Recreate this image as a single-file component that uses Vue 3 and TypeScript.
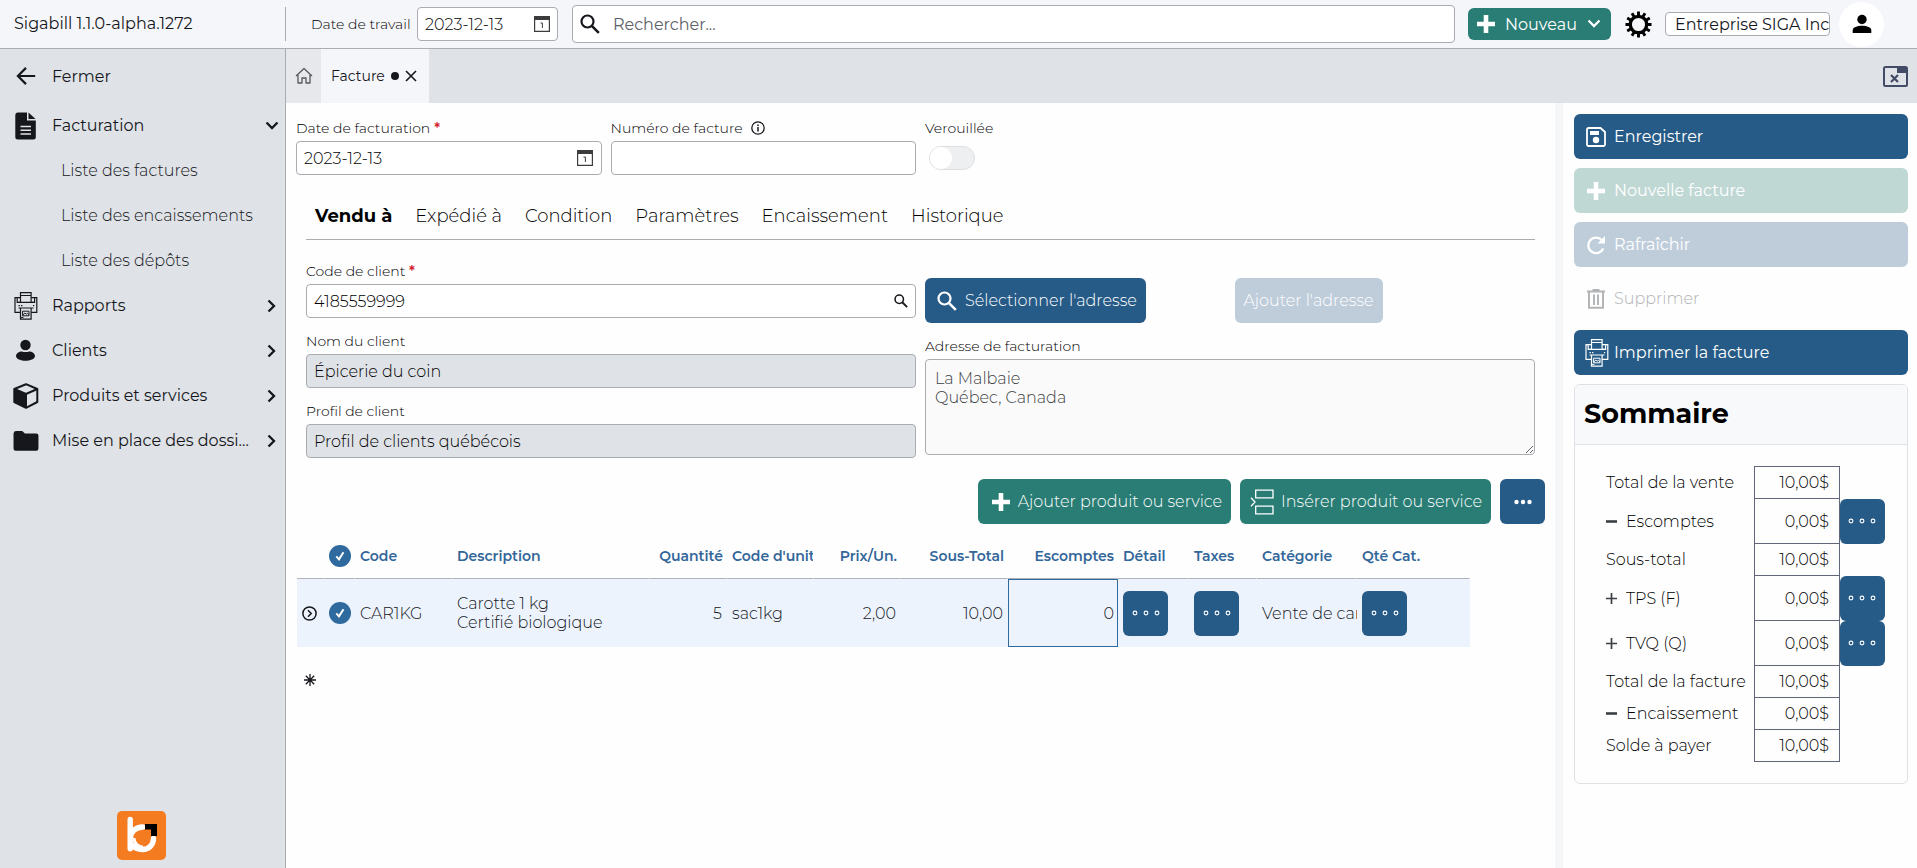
<script setup lang="ts">
import { ref } from 'vue'

interface NavItem {
  label: string
  icon: string
}

interface SummaryRow {
  label: string
  amount: string
  sign?: 'plus' | 'minus'
  more?: boolean
}

const invoiceLinks = ['Liste des factures', 'Liste des encaissements', 'Liste des dépôts']

const navItems: NavItem[] = [
  { label: 'Rapports', icon: 'printer' },
  { label: 'Clients', icon: 'person' },
  { label: 'Produits et services', icon: 'box' },
  { label: 'Mise en place des dossiers', icon: 'folder' },
]

const sections = ['Vendu à', 'Expédié à', 'Condition', 'Paramètres', 'Encaissement', 'Historique']
const activeSection = ref('Vendu à')

const summary: SummaryRow[] = [
  { label: 'Total de la vente', amount: '10,00$' },
  { label: 'Escomptes', amount: '0,00$', sign: 'minus', more: true },
  { label: 'Sous-total', amount: '10,00$' },
  { label: 'TPS (F)', amount: '0,00$', sign: 'plus', more: true },
  { label: 'TVQ (Q)', amount: '0,00$', sign: 'plus', more: true },
  { label: 'Total de la facture', amount: '10,00$' },
  { label: 'Encaissement', amount: '0,00$', sign: 'minus' },
  { label: 'Solde à payer', amount: '10,00$' },
]

const workDate = ref('2023-12-13')
const search = ref('')
const company = ref('Entreprise SIGA Inc.')
const invoiceDate = ref('2023-12-13')
const invoiceNumber = ref('')
const locked = ref(false)
const clientCode = ref('4185559999')
const clientName = ref('Épicerie du coin')
const clientProfile = ref('Profil de clients québécois')
const address = ref('La Malbaie\nQuébec, Canada')
</script>

<template>
  <svg class="sprite" aria-hidden="true">
    <symbol id="printer" viewBox="0 0 24 28">
      <g fill="none" stroke="currentColor" stroke-width="1.2">
        <path d="M6.5 10V.6h10.6V10M6.5 3.5h10.6M4.5 10.3h15" />
        <path d="M6.5 5.6H1v14.8h5.500M17.100 5.600h5.700v14.800h-5.700M3.200 5.800v4.600h3.300M20.600 5.800v4.600h-3.400" />
        <path d="M4.500 16h15M6.500 16v11.200h10.600V16" />
        <path d="M8.600 19.200h6.400v4.600H8.600zM8.800 23l2-2 1.400 1.200 1.200-.9 1.600 1.600M6.500 25.400h3" stroke-width="1" />
        <path d="M4.500 13.600h1.400M7 13.600h1.400M19 13.600h1.200" stroke-width="1.200" />
      </g>
    </symbol>
    <symbol id="person" viewBox="0 0 24 28">
      <circle cx="11.5" cy="8" r="5.2" fill="currentColor" />
      <path d="M2 19c0-2.600 3-4.600 6-4.600 1.500.9 5.500.9 7 0 3 0 6 2 6 4.600 0 3.200-5 4.700-9.500 4.700S2 22.200 2 19z" fill="currentColor" />
    </symbol>
    <symbol id="box" viewBox="0 0 26 26">
      <path d="M13 1.200 24.300 6v13L13 24.800 1.300 19V6z" fill="none" stroke="currentColor" stroke-width="2" stroke-linejoin="round" />
      <path d="M1.300 6 13 11v13.800L1.300 19z" fill="currentColor" />
      <path d="M13 11 24.300 6M13 11v13.500M1.300 6 13 11" fill="none" stroke="currentColor" stroke-width="2" />
    </symbol>
    <symbol id="folder" viewBox="0 0 24 24">
      <path d="M.5 5A2.500 2.500 0 0 1 3 2.800h5.500L11 5h10.500a2 2 0 0 1 2 2v12a2 2 0 0 1-2 2h-19a2 2 0 0 1-2-2z" fill="currentColor" />
    </symbol>
    <symbol id="search" viewBox="0 0 20 20">
      <circle cx="7.500" cy="7.500" r="6" fill="none" stroke="currentColor" stroke-width="2.200" />
      <path d="m11.800 11.800 7 7" stroke="currentColor" stroke-width="2.600" />
    </symbol>
    <symbol id="plus" viewBox="0 0 18 18">
      <path d="M6.700 0h4.600v6.700H18v4.600h-6.700V18H6.700v-6.700H0V6.700h6.700z" fill="currentColor" />
    </symbol>
    <symbol id="calendar" viewBox="0 0 16 16">
      <path d="M.6.6h14.800v14.800H.6z" fill="none" stroke="#3c3c3e" stroke-width="1.200" />
      <path d="M0 0h16v4H0z" fill="#3c3c3e" />
      <path d="M6.500 7h1.900v5" fill="none" stroke="#3c3c3e" stroke-width="1" />
    </symbol>
    <symbol id="rings" viewBox="0 0 28 6">
      <g fill="none" stroke="currentColor" stroke-width="1.100">
        <circle cx="3" cy="3" r="1.900" /><circle cx="14" cy="3" r="1.900" /><circle cx="25" cy="3" r="1.900" />
      </g>
    </symbol>
    <symbol id="chevron" viewBox="0 0 14 14">
      <path d="m3.500 1.500 5.500 5.500-5.500 5.500" fill="none" stroke="currentColor" stroke-width="2.300" />
    </symbol>
    <symbol id="check" viewBox="0 0 22 22">
      <circle cx="11" cy="11" r="11" fill="#2f6a9f" />
      <path d="m7.300 11.300 2.700 3 4.500-7" fill="none" stroke="#fff" stroke-width="2" />
    </symbol>
  </svg>

  <div class="app">
    <header class="topbar">
      <div class="brand">Sigabill 1.1.0-alpha.1272</div>
      <div class="work-date">
        <label for="work-date">Date de travail</label>
        <div class="field date">
          <input id="work-date" v-model="workDate" type="text" />
          <button type="button" class="bare" aria-label="Choisir la date de travail">
            <svg class="i16"><use href="#calendar" /></svg>
          </button>
        </div>
      </div>
      <div class="search">
        <svg class="i20"><use href="#search" /></svg>
        <input v-model="search" type="text" placeholder="Rechercher..." aria-label="Rechercher" />
      </div>
      <button type="button" class="new">
        <svg class="i18"><use href="#plus" /></svg>
        <span>Nouveau</span>
        <svg class="i14 down"><use href="#chevron" /></svg>
      </button>
      <button type="button" class="bare gear" aria-label="Réglages">
        <svg viewBox="0 0 28 28">
          <circle cx="14" cy="14" r="8.500" fill="none" stroke="#000" stroke-width="3.400" />
          <g stroke="#000" stroke-width="3">
            <path d="M14 .5v5M14 22.500v5M.5 14h5M22.500 14h5M7.250 2.300l2.500 4.330M18.250 21.370l2.500 4.330M2.300 7.250l4.330 2.500M21.370 18.250l4.330 2.500M20.750 2.300l-2.500 4.330M9.750 21.370l-2.500 4.330M25.700 7.250l-4.330 2.500M6.630 18.250l-4.330 2.500" />
          </g>
        </svg>
      </button>
      <input v-model="company" class="company" type="text" aria-label="Entreprise" />
      <button type="button" class="bare avatar" aria-label="Compte">
        <svg viewBox="0 0 20 20">
          <circle cx="10" cy="5.500" r="4.700" fill="#000" />
          <path d="M.7 19v-2.600c0-3 4.300-4.600 9.300-4.600s9.300 1.600 9.300 4.600V19z" fill="#000" />
        </svg>
      </button>
    </header>

    <nav class="sidebar">
      <button type="button" class="nav-row close-nav">
        <span class="nav-icon">
          <svg viewBox="0 0 24 24"><path d="M20.500 12H4.500M12 4.500 4.500 12l7.500 7.500" fill="none" stroke="currentColor" stroke-width="2" /></svg>
        </span>
        <span class="nav-text">Fermer</span>
      </button>
      <button type="button" class="nav-row">
        <span class="nav-icon">
          <svg viewBox="0 0 24 28">
            <path d="M3.500.5H13V8.500h8.800V25a2.500 2.500 0 0 1-2.500 2.500H3.800A2.500 2.500 0 0 1 1.300 25V3A2.500 2.500 0 0 1 3.500.5z" fill="currentColor" />
            <path d="m14.500.5 7 6.500h-7z" fill="currentColor" />
            <path d="M6.500 14.500h10.500M6.500 18.300h10.500M6.500 22h10.500" stroke="#dfe2e6" stroke-width="1.500" />
          </svg>
        </span>
        <span class="nav-text">Facturation</span>
        <svg class="i14 down"><use href="#chevron" /></svg>
      </button>
      <a v-for="link in invoiceLinks" :key="link" href="#" class="sub-link">{{ link }}</a>
      <button v-for="item in navItems" :key="item.label" type="button" class="nav-row">
        <span class="nav-icon"><svg><use :href="'#' + item.icon" /></svg></span>
        <span class="nav-text">{{ item.label }}</span>
        <svg class="i14"><use href="#chevron" /></svg>
      </button>
      <div class="logo">
        <svg viewBox="0 0 49 49" role="img" aria-label="Logo">
          <rect width="49" height="49" rx="5" fill="#f47b20" />
          <path d="M13.200 8.500v29.300M13.500 27c0-6 5-11 12.300-11M36.500 27.500c0 6.500-5 11-11 11-5 0-8.500-2-11-5" fill="none" stroke="#fff" stroke-width="5.400" stroke-linecap="round" />
          <path d="M17 27a9 9 0 0 0 9 9" fill="none" stroke="#fff" stroke-width="3" />
          <path d="M28 13h12v12h-6v-6.500h-6z" fill="#000" />
        </svg>
      </div>
    </nav>

    <div class="tabbar">
      <button type="button" class="home" aria-label="Accueil">
        <svg viewBox="0 0 18 18">
          <path d="M1 9 9 1.500 17 9M3 8v8h4v-5h4v5h4V8" fill="none" stroke="#55585e" stroke-width="1.300" stroke-linejoin="round" />
        </svg>
      </button>
      <div class="tab">
        <span>Facture</span>
        <i class="dot"></i>
        <button type="button" class="bare" aria-label="Fermer l'onglet">
          <svg viewBox="0 0 12 12"><path d="m1 1 10 10M11 1 1 11" stroke="#15171c" stroke-width="1.600" /></svg>
        </button>
      </div>
      <button type="button" class="bare close-all" aria-label="Fermer tous les onglets">
        <svg viewBox="0 0 25 21">
          <rect x="1" y="1" width="23" height="19" rx="1.500" fill="none" stroke="#434c66" stroke-width="2" />
          <path d="M14 1h10v6H14z" fill="#434c66" />
          <path d="m8 9 7 7M15 9l-7 7" stroke="#434c66" stroke-width="2.200" />
        </svg>
      </button>
    </div>

    <main class="main">
      <div class="quad">
        <div>
          <label for="inv-date">Date de facturation <b>*</b></label>
          <div class="field">
            <input id="inv-date" v-model="invoiceDate" type="text" />
            <button type="button" class="bare" aria-label="Choisir la date de facturation">
              <svg class="i16"><use href="#calendar" /></svg>
            </button>
          </div>
        </div>
        <div>
          <label for="inv-number">Numéro de facture
            <svg class="info" viewBox="0 0 14 14">
              <circle cx="7" cy="7" r="6.200" fill="none" stroke="#15171c" stroke-width="1.300" />
              <path d="M7 6v4.500M7 3.500V5" stroke="#15171c" stroke-width="1.500" />
            </svg>
          </label>
          <div class="field"><input id="inv-number" v-model="invoiceNumber" type="text" /></div>
        </div>
        <div>
          <label for="locked">Verouillée</label>
          <input id="locked" v-model="locked" type="checkbox" class="switch" />
        </div>
      </div>

      <div class="sections">
        <button
          v-for="name in sections"
          :key="name"
          type="button"
          :class="{ active: name === activeSection }"
          @click="activeSection = name"
        >{{ name }}</button>
      </div>

      <div class="halves">
        <div class="stack">
          <div>
            <label for="code">Code de client <b>*</b></label>
            <div class="field">
              <input id="code" v-model="clientCode" type="text" />
              <button type="button" class="bare" aria-label="Chercher un client">
                <svg class="i14"><use href="#search" /></svg>
              </button>
            </div>
          </div>
          <div>
            <label for="name">Nom du client</label>
            <div class="field off"><input id="name" v-model="clientName" type="text" readonly /></div>
          </div>
          <div>
            <label for="profile">Profil de client</label>
            <div class="field off"><input id="profile" v-model="clientProfile" type="text" readonly /></div>
          </div>
        </div>
        <div class="address">
          <div class="address-actions">
            <div>
              <button type="button" class="btn blue"><svg class="i20"><use href="#search" /></svg>Sélectionner l'adresse</button>
            </div>
            <div><button type="button" class="btn blue" disabled>Ajouter l'adresse</button></div>
          </div>
          <label for="address">Adresse de facturation</label>
          <textarea id="address" v-model="address" readonly></textarea>
        </div>
      </div>

      <div class="line-actions">
        <button type="button" class="btn green add"><svg class="i18"><use href="#plus" /></svg>Ajouter produit ou service</button>
        <button type="button" class="btn green insert">
          <svg viewBox="0 0 24 26">
            <path d="M5.700 1.200h17.300v7.600H5.700zM5.700 17.200h17.300v7.600H5.700zM1 8.800 5 13l-4 4.200" fill="none" stroke="currentColor" stroke-width="1.300" />
          </svg>Insérer produit ou service
        </button>
        <button type="button" class="btn blue square" aria-label="Plus d'actions">
          <svg class="dots" viewBox="0 0 18 6"><g fill="currentColor"><circle cx="2.500" cy="3" r="2.200" /><circle cx="9" cy="3" r="2.200" /><circle cx="15.500" cy="3" r="2.200" /></g></svg>
        </button>
      </div>

      <table class="lines">
        <colgroup>
          <col class="w27" /><col class="w31" /><col class="w97" /><col class="w198" /><col class="w77" />
          <col class="w87" /><col class="w87" /><col class="w107" /><col class="w110" /><col class="w71" />
          <col class="w68" /><col class="w100" /><col class="w113" />
        </colgroup>
        <thead>
          <tr>
            <th></th>
            <th><svg class="i22"><use href="#check" /></svg></th>
            <th>Code</th>
            <th>Description</th>
            <th class="num">Quantité</th>
            <th>Code d'unité</th>
            <th class="num">Prix/Un.</th>
            <th class="num">Sous-Total</th>
            <th class="num">Escomptes</th>
            <th>Détail</th>
            <th>Taxes</th>
            <th>Catégorie</th>
            <th>Qté Cat.</th>
          </tr>
        </thead>
        <tbody>
          <tr class="item">
            <td>
              <svg class="i15" viewBox="0 0 15 15">
                <circle cx="7.500" cy="7.500" r="6.600" fill="none" stroke="#15171c" stroke-width="1.500" />
                <path d="m6 4.300 3.200 3.200L6 10.700" fill="none" stroke="#15171c" stroke-width="1.500" />
              </svg>
            </td>
            <td><svg class="i22"><use href="#check" /></svg></td>
            <td>CAR1KG</td>
            <td>Carotte 1 kg<br />Certifié biologique</td>
            <td class="num">5</td>
            <td>sac1kg</td>
            <td class="num">2,00</td>
            <td class="num">10,00</td>
            <td class="num focused">0</td>
            <td><button type="button" class="btn blue square" aria-label="Détail"><svg class="rings"><use href="#rings" /></svg></button></td>
            <td><button type="button" class="btn blue square" aria-label="Taxes"><svg class="rings"><use href="#rings" /></svg></button></td>
            <td>Vente de carottes</td>
            <td><button type="button" class="btn blue square" aria-label="Qté Cat."><svg class="rings"><use href="#rings" /></svg></button></td>
          </tr>
          <tr class="fresh">
            <td colspan="13">
              <svg class="i12" viewBox="0 0 12 12">
                <path d="M6 0v12M0 6h12M1.800 1.800l8.400 8.400M10.200 1.800l-8.400 8.400" stroke="#15171c" stroke-width="1.300" />
              </svg>
            </td>
          </tr>
        </tbody>
      </table>
    </main>

    <aside class="side">
      <button type="button" class="btn blue">
        <svg class="i20" viewBox="0 0 20 20">
          <path d="M2.500 1h12L19 5v12.500a1.500 1.500 0 0 1-1.500 1.500h-15A1.500 1.500 0 0 1 1 17.500v-15A1.500 1.500 0 0 1 2.500 1z" fill="none" stroke="currentColor" stroke-width="1.800" />
          <path d="M4 4h9v4H4z" fill="currentColor" />
          <circle cx="10" cy="13" r="3.200" fill="currentColor" />
        </svg>Enregistrer
      </button>
      <button type="button" class="btn green" disabled><svg class="i18"><use href="#plus" /></svg>Nouvelle facture</button>
      <button type="button" class="btn blue" disabled>
        <svg class="i20" viewBox="0 0 20 20">
          <path d="M16 5.200A7.800 7.800 0 1 0 17.300 13.500" fill="none" stroke="currentColor" stroke-width="2.300" />
          <path d="M19 1v7.500h-7.500z" fill="currentColor" />
        </svg>Rafraîchir
      </button>
      <button type="button" class="btn plain" disabled>
        <svg class="i20" viewBox="0 0 20 20">
          <path d="M1 2.500h18M6.500 1h7M3 2.500v16.200h14V2.500M8 5.500v10.500M12 5.500v10.500" fill="none" stroke="currentColor" stroke-width="1.900" />
        </svg>Supprimer
      </button>
      <button type="button" class="btn blue print"><svg><use href="#printer" /></svg>Imprimer la facture</button>

      <section class="card">
        <h2>Sommaire</h2>
        <table class="summary">
          <tbody>
            <tr v-for="row in summary" :key="row.label" :class="{ tall: row.more }">
              <th scope="row">
                <svg v-if="row.sign" class="sign" viewBox="0 0 11 11">
                  <path :d="row.sign === 'plus' ? 'M5.5 0v11M0 5.5h11' : 'M0 5.5h11'" stroke="#3b3e44" :stroke-width="row.sign === 'plus' ? 1.7 : 2.6" />
                </svg>{{ row.label }}
              </th>
              <td class="amount">{{ row.amount }}</td>
              <td class="more">
                <button v-if="row.more" type="button" class="btn blue square" :aria-label="row.label">
                  <svg class="rings"><use href="#rings" /></svg>
                </button>
              </td>
            </tr>
          </tbody>
        </table>
      </section>
    </aside>
  </div>
</template>

<style>
body {
  margin: 0;
}
</style>

<style scoped>
.app {
  --blue: #275b87;
  --green: #297d74;
  --line: #a9adb2;
  --ink: #15171c;
  --grey: #dfe2e6;
  display: grid;
  grid-template-columns: 286px minmax(0, 1fr) 362px;
  grid-template-rows: 49px 54px minmax(0, 1fr);
  grid-template-areas: 'top top top' 'nav tabs tabs' 'nav main side';
  min-height: 100vh;
  font-family: Montserrat, Inter, 'Open Sans', sans-serif;
  font-size: 16px;
  line-height: 19px;
  color: var(--ink);
  background: #fefefe;
}
.app * {
  box-sizing: border-box;
}
.sprite {
  position: absolute;
  width: 0;
  height: 0;
}
button,
input,
textarea {
  font: inherit;
  color: inherit;
  margin: 0;
}
button {
  cursor: pointer;
}
svg {
  display: block;
  flex: none;
}
.i12 { width: 12px; height: 12px; }
.i14 { width: 14px; height: 14px; }
.i15 { width: 15px; height: 15px; }
.i16 { width: 16px; height: 16px; }
.i18 { width: 18px; height: 18px; }
.i20 { width: 20px; height: 20px; }
.i22 { width: 22px; height: 22px; }
.down { transform: rotate(90deg); }
.rings { width: 28px; height: 6px; }
.bare {
  padding: 0;
  border: 0;
  background: none;
  display: flex;
  align-items: center;
  justify-content: center;
}
label {
  display: block;
  font-size: 14px;
  font-weight: 300;
  line-height: 18px;
  color: #000;
}
label b {
  color: #d4202e;
  font-weight: 600;
}

/* Top bar */
.topbar {
  grid-area: top;
  display: flex;
  align-items: center;
  padding-right: 33px;
  background: #f5f6f9;
  border-bottom: 1px solid var(--line);
}
.brand {
  width: 286px;
  height: 34px;
  line-height: 34px;
  padding-left: 14px;
  flex: none;
  border-right: 1px solid var(--line);
}
.work-date {
  display: flex;
  align-items: center;
  flex: none;
  width: 272px;
  padding-left: 25px;
}
.work-date label {
  width: 106px;
}
.field {
  display: flex;
  align-items: center;
  height: 34px;
  padding-right: 7px;
  background: #fff;
  border: 1px solid var(--line);
  border-radius: 4px;
}
.field input {
  flex: 1;
  min-width: 0;
  width: 100%;
  padding: 0 7px;
  border: 0;
  outline: 0;
  background: none;
  font-weight: 300;
  color: #000;
}
.field.off {
  background: var(--grey);
}
.field.date {
  width: 141px;
}
.search {
  display: flex;
  align-items: center;
  flex: 1;
  height: 38px;
  margin: 0 13px 0 14px;
  padding-left: 7px;
  background: #fff;
  border: 1px solid var(--line);
  border-radius: 4px;
}
.search input {
  flex: 1;
  padding: 0 13px;
  border: 0;
  outline: 0;
  background: none;
}
.search input::placeholder {
  color: #5d6268;
  opacity: 1;
}
.new {
  display: flex;
  align-items: center;
  justify-content: space-between;
  width: 143px;
  height: 32px;
  padding: 0 10px 0 9px;
  border: 0;
  border-radius: 6px;
  background: var(--green);
  color: #fff;
}
.gear {
  margin: 0 13px 0 14px;
}
.gear svg {
  width: 27px;
  height: 27px;
}
.company {
  width: 165px;
  height: 24px;
  padding: 0 0 0 9px;
  border: 1px solid var(--line);
  border-radius: 4px;
  background: #fff;
}
.avatar {
  width: 45px;
  height: 45px;
  margin-left: 9px;
  border-radius: 50%;
  background: #fff;
}
.avatar svg {
  width: 20px;
  height: 20px;
}

/* Sidebar */
.sidebar {
  grid-area: nav;
  display: flex;
  flex-direction: column;
  background: var(--grey);
  border-right: 1px solid var(--line);
}
.nav-row {
  display: flex;
  align-items: center;
  height: 45px;
  padding: 0 6px 0 13px;
  border: 0;
  background: none;
  text-align: left;
}
.close-nav {
  height: 54px;
}
.nav-icon {
  width: 26px;
  height: 28px;
  margin-right: 13px;
  flex: none;
}
.nav-icon svg {
  width: 26px;
  height: 28px;
}
.nav-text {
  flex: 1;
  min-width: 0;
  padding-right: 12px;
  overflow: hidden;
  white-space: nowrap;
  text-overflow: ellipsis;
}
.sub-link {
  height: 45px;
  padding-left: 61px;
  line-height: 45px;
  font-weight: 300;
  color: var(--ink);
  text-decoration: none;
}
.logo {
  margin-top: auto;
  padding: 0 0 8px 117px;
}
.logo svg {
  width: 49px;
  height: 49px;
}

/* Tab bar */
.tabbar {
  grid-area: tabs;
  display: flex;
  background: var(--grey);
}
.home {
  width: 35px;
  padding: 0 8px 0 9px;
  border: 0;
  background: #e7e8ec;
}
.home svg {
  width: 18px;
  height: 18px;
}
.tab {
  display: flex;
  align-items: center;
  justify-content: space-between;
  width: 108px;
  padding: 0 12px 0 10px;
  background: #f5f6f9;
  font-size: 14px;
}
.dot {
  width: 8px;
  height: 8px;
  border-radius: 50%;
  background: var(--ink);
}
.tab svg {
  width: 12px;
  height: 12px;
}
.close-all {
  margin: 0 9px 0 auto;
}
.close-all svg {
  width: 25px;
  height: 21px;
}

/* Invoice form */
.main {
  padding: 16px 10px 20px;
  background: #fefefe;
}
.quad {
  display: grid;
  grid-template-columns: repeat(4, minmax(0, 1fr));
  gap: 9px;
}
.quad label {
  display: flex;
  align-items: center;
  gap: 4px;
  margin-bottom: 4px;
}
.quad .field {
  padding-right: 8px;
}
.info {
  width: 14px;
  height: 14px;
  margin-left: 4px;
}
.switch {
  appearance: none;
  display: block;
  width: 46px;
  height: 24px;
  margin: 9px 0 0 4px;
  border: 1px solid #dcdee0;
  border-radius: 12px;
  background: #eeeff0;
}
.switch::before {
  content: '';
  display: block;
  width: 22px;
  height: 22px;
  border-radius: 50%;
  background: #fff;
}
.switch:checked::before {
  margin-left: auto;
}
.sections {
  display: flex;
  gap: 23px;
  height: 48px;
  margin: 17px 10px 0;
  padding-left: 9px;
  border-bottom: 1px solid var(--line);
}
.sections button {
  padding: 2px 0 0;
  border: 0;
  background: none;
  font-size: 18px;
  font-weight: 300;
  color: #000;
}
.sections .active {
  font-weight: 700;
}
.halves {
  display: grid;
  grid-template-columns: repeat(2, minmax(0, 1fr));
  gap: 9px;
  margin: 22px 10px 0;
}
.stack {
  display: grid;
  align-content: start;
  gap: 14px;
}
.stack label {
  margin-bottom: 4px;
}
.address {
  display: flex;
  flex-direction: column;
  padding-top: 16px;
}
.address-actions {
  display: grid;
  grid-template-columns: repeat(2, minmax(0, 1fr));
  gap: 9px;
  margin-bottom: 14px;
}
textarea {
  height: 96px;
  margin-top: 4px;
  padding: 9px;
  border: 1px solid var(--line);
  border-radius: 4px;
  outline: 0;
  background: #fafafa;
  color: #3c3f43;
  font-weight: 300;
}
.btn {
  display: flex;
  align-items: center;
  gap: 8px;
  height: 45px;
  padding: 0 9px 0 12px;
  border: 0;
  border-radius: 6px;
  color: #fff;
  font-weight: 300;
  white-space: nowrap;
}
.side .btn {
  font-weight: 400;
}
.blue { background: var(--blue); }
.green { background: var(--green); }
.btn:disabled { cursor: default; color: #fff; }
.blue:disabled { background: #bfcddb; }
.green:disabled { background: #bfd8d4; }
.address-actions .blue:disabled { padding: 0 9px; }
.side .plain:disabled {
  background: none;
  color: #b2b3b5;
  font-weight: 300;
}
.btn.square {
  width: 45px;
  padding: 0;
  justify-content: center;
}
.dots {
  width: 18px;
  height: 6px;
}
.line-actions {
  display: flex;
  justify-content: flex-end;
  gap: 9px;
  margin-top: 21px;
}
.add {
  padding-left: 14px;
}
.insert {
  gap: 7px;
  padding-left: 10px;
}
.insert svg {
  width: 24px;
  height: 26px;
}

/* Invoice lines */
.lines {
  table-layout: fixed;
  width: 1173px;
  margin-top: 10px;
  margin-left: 1px;
  border-spacing: 0;
}
.w27 { width: 27px; }
.w31 { width: 31px; }
.w68 { width: 68px; }
.w71 { width: 71px; }
.w77 { width: 77px; }
.w87 { width: 87px; }
.w97 { width: 97px; }
.w100 { width: 100px; }
.w107 { width: 107px; }
.w110 { width: 110px; }
.w113 { width: 113px; }
.w198 { width: 198px; }
.lines th {
  height: 45px;
  padding: 0 3px 0 5px;
  border-right: 1px solid #fefefe;
  border-bottom: 1px solid #b0b1bd;
  overflow: hidden;
  white-space: nowrap;
  text-align: left;
  font-size: 14px;
  font-weight: 600;
  color: #336699;
}
.lines td {
  padding: 0 5px;
  overflow: hidden;
  white-space: nowrap;
  font-weight: 300;
}
.lines .num {
  text-align: right;
}
.item td {
  height: 68px;
  background: #ecf3fc;
}
.lines .focused {
  padding: 0 3px;
  border: 1px solid #2f6a9f;
}
.fresh td {
  height: 66px;
  padding-left: 7px;
}

/* Side panel */
.side {
  grid-area: side;
  display: flex;
  flex-direction: column;
  gap: 9px;
  padding: 11px 9px 11px 11px;
  border-left: 8px solid #f5f6f7;
}
.print {
  gap: 5px;
  padding-left: 11px;
}
.print svg {
  width: 24px;
  height: 28px;
}
.side .i18 {
  margin: 0 1px;
}
.card {
  border: 1px solid #dee1e5;
  border-radius: 6px;
  overflow: hidden;
}
.card h2 {
  height: 60px;
  margin: 0;
  padding-left: 9px;
  border-bottom: 1px solid #dee1e5;
  background: #f8f9fb;
  font-size: 27px;
  line-height: 57px;
  color: #000;
}
.summary {
  margin: 21px 22px 21px 31px;
  border-collapse: collapse;
}
.summary th {
  width: 149px;
  height: 32px;
  padding: 0;
  text-align: left;
  font-weight: 300;
  color: #000;
  white-space: nowrap;
}
.summary .tall th {
  height: 45px;
}
.sign {
  display: inline-block;
  width: 11px;
  height: 11px;
  margin-right: 9px;
}
.summary td {
  padding: 0;
}
.summary .amount {
  width: 85px;
  padding-right: 10px;
  border: 1px solid #62667a;
  text-align: right;
  font-weight: 300;
  color: #000;
}
.summary .more {
  width: 45px;
}
</style>
